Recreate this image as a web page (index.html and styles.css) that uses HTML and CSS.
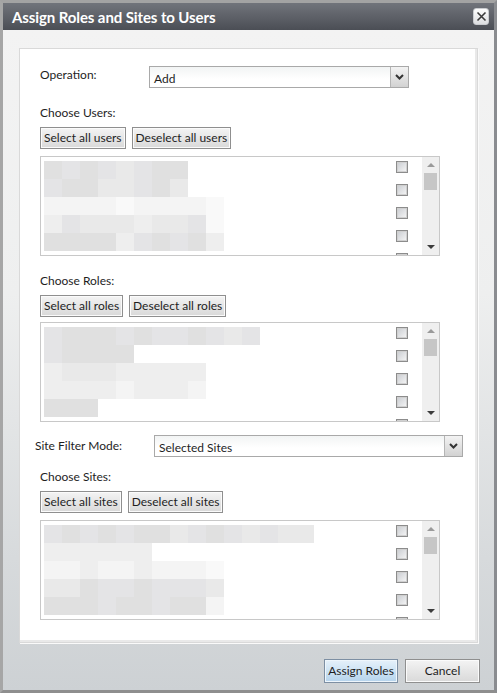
FILE: index.html
```html
<!DOCTYPE html>
<html>
<head>
<meta charset="utf-8">
<link rel="stylesheet" href="styles.css">
</head>
<body>
<div class="window">
  <div class="titlebar">
    <span class="title">Assign Roles and Sites to Users</span>
    <span class="close"><svg width="11" height="11" viewBox="0 0 11 11"><path d="M1.5 1.5 L9.5 9.5 M9.5 1.5 L1.5 9.5" stroke="#3a3a3a" stroke-width="1.6" fill="none"/></svg></span>
  </div>
  <div class="body">
    <div class="panel">
      <div class="row op-row">
        <span class="label op-label">Operation:</span>
        <div class="select op-select"><span class="sel-text">Add</span><span class="sel-btn"><svg width="9" height="6" viewBox="0 0 9 6"><path d="M1 1 L4.5 4.5 L8 1" stroke="#333" stroke-width="2" fill="none"/></svg></span></div>
      </div>

      <div class="label section">Choose Users:</div>
      <div class="btns"><button class="btn">Select all users</button><button class="btn">Deselect all users</button></div>
      <div class="list">
        <div class="blur">
          <div class="brow"><i class="s1"></i><i class="s2"></i><i class="s1"></i><i class="s2"></i><i class="s3"></i><i class="s2"></i><i class="s1"></i><i class="s1"></i></div>
          <div class="brow"><i class="s2"></i><i class="s1"></i><i class="s1"></i><i class="s3"></i><i class="s3"></i><i class="s2"></i><i class="s1"></i><i class="s3"></i></div>
          <div class="brow"><i class="s5"></i><i class="s5"></i><i class="s5"></i><i class="s5"></i><i class="s6"></i><i class="s5"></i><i class="s5"></i><i class="s5"></i><i class="s5"></i><i class="s6"></i></div>
          <div class="brow"><i class="s4"></i><i class="s2"></i><i class="s3"></i><i class="s3"></i><i class="s3"></i><i class="s4"></i><i class="s3"></i><i class="s3"></i><i class="s2"></i><i class="s6"></i></div>
          <div class="brow"><i class="s1"></i><i class="s1"></i><i class="s1"></i><i class="s1"></i><i class="s4"></i><i class="s2"></i><i class="s1"></i><i class="s2"></i><i class="s1"></i><i class="s4"></i></div>
        </div>
        <div class="checks"><span class="cb"></span><span class="cb"></span><span class="cb"></span><span class="cb"></span><span class="cb"></span></div>
        <div class="scroll"><span class="up"></span><span class="thumb"></span><span class="down"></span></div>
      </div>

      <div class="label section">Choose Roles:</div>
      <div class="btns"><button class="btn">Select all roles</button><button class="btn">Deselect all roles</button></div>
      <div class="list roles-list">
        <div class="blur">
          <div class="brow"><i class="s2"></i><i class="s1"></i><i class="s1"></i><i class="s1"></i><i class="s2"></i><i class="s1"></i><i class="s2"></i><i class="s2"></i><i class="s1"></i><i class="s2"></i><i class="s3"></i><i class="s2"></i></div>
          <div class="brow"><i class="s2"></i><i class="s1"></i><i class="s1"></i><i class="s1"></i><i class="s1"></i></div>
          <div class="brow"><i class="s4"></i><i class="s3"></i><i class="s3"></i><i class="s3"></i><i class="s4"></i><i class="s4"></i><i class="s4"></i><i class="s4"></i><i class="s4"></i></div>
          <div class="brow"><i class="s4"></i><i class="s4"></i><i class="s4"></i><i class="s4"></i><i class="s5"></i><i class="s4"></i><i class="s4"></i><i class="s4"></i><i class="s5"></i></div>
          <div class="brow"><i class="s1"></i><i class="s1"></i><i class="s1"></i></div>
        </div>
        <div class="checks"><span class="cb"></span><span class="cb"></span><span class="cb"></span><span class="cb"></span><span class="cb"></span></div>
        <div class="scroll"><span class="up"></span><span class="thumb"></span><span class="down"></span></div>
      </div>

      <div class="row site-row">
        <span class="label site-label">Site Filter Mode:</span>
        <div class="select site-select"><span class="sel-text">Selected Sites</span><span class="sel-btn"><svg width="9" height="6" viewBox="0 0 9 6"><path d="M1 1 L4.5 4.5 L8 1" stroke="#333" stroke-width="2" fill="none"/></svg></span></div>
      </div>

      <div class="label section sites-label">Choose Sites:</div>
      <div class="btns"><button class="btn">Select all sites</button><button class="btn">Deselect all sites</button></div>
      <div class="list">
        <div class="blur">
          <div class="brow"><i class="s2"></i><i class="s1"></i><i class="s2"></i><i class="s1"></i><i class="s2"></i><i class="s1"></i><i class="s1"></i><i class="s3"></i><i class="s2"></i><i class="s1"></i><i class="s2"></i><i class="s3"></i><i class="s2"></i><i class="s3"></i><i class="s3"></i></div>
          <div class="brow"><i class="s4"></i><i class="s4"></i><i class="s4"></i><i class="s4"></i><i class="s4"></i><i class="s4"></i></div>
          <div class="brow"><i class="s5"></i><i class="s5"></i><i class="s4"></i><i class="s5"></i><i class="s5"></i><i class="s4"></i><i class="s5"></i><i class="s5"></i><i class="s5"></i><i class="s6"></i></div>
          <div class="brow"><i class="s3"></i><i class="s3"></i><i class="s1"></i><i class="s2"></i><i class="s2"></i><i class="s1"></i><i class="s2"></i><i class="s2"></i><i class="s2"></i><i class="s3"></i></div>
          <div class="brow"><i class="s1"></i><i class="s1"></i><i class="s1"></i><i class="s2"></i><i class="s1"></i><i class="s1"></i><i class="s2"></i><i class="s1"></i><i class="s1"></i><i class="s5"></i></div>
        </div>
        <div class="checks"><span class="cb"></span><span class="cb"></span><span class="cb"></span><span class="cb"></span><span class="cb"></span></div>
        <div class="scroll"><span class="up"></span><span class="thumb"></span><span class="down"></span></div>
      </div>
    </div>
    <div class="footer">
      <button class="btn fbtn primary">Assign Roles</button>
      <button class="btn fbtn">Cancel</button>
    </div>
  </div>
</div>
</body>
</html>
```
FILE: styles.css
```css
* { box-sizing: border-box; }
html, body { margin: 0; padding: 0; }
body {
  width: 497px;
  height: 693px;
  font-family: "Lato", "Open Sans", sans-serif;
  font-size: 12px;
  color: #1e1e1e;
  background: #9c9c9c;
}
.window {
  width: 497px;
  height: 693px;
  border-top: 3px solid #a3a3a3;
  border-left: 3px solid #a6a6a6;
  border-right: 3px solid #8a8c90;
  border-bottom: 3px solid #8e8e8e;
  display: flex;
  flex-direction: column;
}
.titlebar {
  height: 27px;
  flex: none;
  display: flex;
  align-items: center;
  justify-content: space-between;
  padding: 0 5px 0 9px;
  background: linear-gradient(#71747b, #4b4e55);
}
.title {
  color: #fff;
  font-weight: bold;
  font-size: 15px;
  letter-spacing: -0.1px;
}
.close {
  width: 16px;
  height: 17px;
  border: 1px solid #c9cbcf;
  border-radius: 3px;
  background: linear-gradient(#fdfdfd, #dcdde0);
  display: flex;
  align-items: center;
  justify-content: center;
  margin-top: -1px;
}
.body {
  flex: 1;
  display: flex;
  flex-direction: column;
  padding: 18px 16px 0 16px;
  background: linear-gradient(#f3f3f3 0%, #eeefef 40%, #d7dadc 80%, #cdd1d4 100%);
}
.panel {
  height: 595px;
  flex: none;
  background: #fff;
  border: 1px solid #d9d9d9;
  box-shadow: inset -2px -2px 0 #e9e9e9, 1px 1px 0 #fafafa;
  padding: 17px 0 0 20px;
  display: flex;
  flex-direction: column;
  align-items: flex-start;
}
.row { display: flex; align-items: center; height: 22px; }
.label { line-height: 16px; }
.op-label { width: 109px; margin-top: -5px; }
.site-row { margin-top: 13px; margin-left: -5px; }
.site-label { width: 119px; margin-top: 0; }
.select {
  height: 22px;
  border: 1px solid #a9a9a9;
  background: linear-gradient(#f2f4f4, #ffffff 60%);
  display: flex;
  align-items: stretch;
}
.op-select { width: 260px; }
.site-select { width: 309px; }
.sel-text { flex: 1; padding: 4px 0 0 4px; font-size: 12px; }
.sel-btn {
  width: 18px;
  border-left: 1px solid #b5b5b5;
  background: linear-gradient(#f3f3f3, #d2d2d2);
  display: flex;
  align-items: center;
  justify-content: center;
}
.section { margin-top: 17px; }
.sites-label { margin-top: 12px; }
.btns { display: flex; gap: 6px; margin-top: 6px; }
.btn {
  font-family: inherit;
  font-size: 12px;
  color: #1e1e1e;
  height: 22px;
  padding: 0 3px;
  border: 1px solid #8f8f8f;
  border-radius: 0;
  background: linear-gradient(#f4f4f4, #e6e6e6 50%, #d9d9d9);
  box-shadow: inset 0 0 0 1px #fbfbfb;
  line-height: 18px;
  white-space: nowrap;
}
.list {
  margin-top: 7px;
  width: 400px;
  height: 100px;
  border: 1px solid #c8c8c8;
  display: flex;
  background: #fff;
}
.roles-list { margin-top: 5px; }
.blur { flex: 1; padding: 4px 0 0 3px; }
.brow { display: flex; height: 18px; }
.brow i { width: 18px; height: 18px; display: block; }
.s1 { background: #e0e0e0; }
.s2 { background: #e4e4e6; }
.s3 { background: #e9e9e9; }
.s4 { background: #eeeeee; }
.s5 { background: #f4f4f4; }
.s6 { background: #f9f9f9; }
.checks {
  width: 26px;
  padding-top: 4px;
  display: flex;
  flex-direction: column;
  gap: 11px;
  overflow: hidden;
}
.cb {
  flex: none;
  width: 12px;
  height: 12px;
  border: 1px solid #8c8c8c;
  box-shadow: inset 0 0 0 1px #d0d0d0;
  background: linear-gradient(135deg, #c8cbd0, #f7f7f7);
}
.scroll {
  width: 17px;
  background: #efefef;
  display: flex;
  flex-direction: column;
  align-items: center;
}
.up {
  margin-top: 6px;
  width: 0; height: 0;
  border-left: 4px solid transparent;
  border-right: 4px solid transparent;
  border-bottom: 4px solid #9a9a9a;
}
.thumb {
  margin-top: 6px;
  width: 13px;
  height: 17px;
  background: #c6c6c6;
}
.down {
  margin-top: auto;
  margin-bottom: 6px;
  width: 0; height: 0;
  border-left: 4px solid transparent;
  border-right: 4px solid transparent;
  border-top: 4px solid #3c3c3c;
}
.footer {
  display: flex;
  justify-content: flex-end;
  gap: 7px;
  padding-top: 16px;
  margin-right: -2px;
}
.fbtn {
  height: 24px;
  width: 75px;
  padding: 0;
  border: 1px solid #8f8f8f;
  line-height: 20px;
}
.primary {
  width: 74px;
  border-color: #7d8fa3;
  background: linear-gradient(#e6f1fa, #cde3f4 50%, #b5d3ec);
  box-shadow: inset 0 0 0 1px #eef6fc;
}
```
